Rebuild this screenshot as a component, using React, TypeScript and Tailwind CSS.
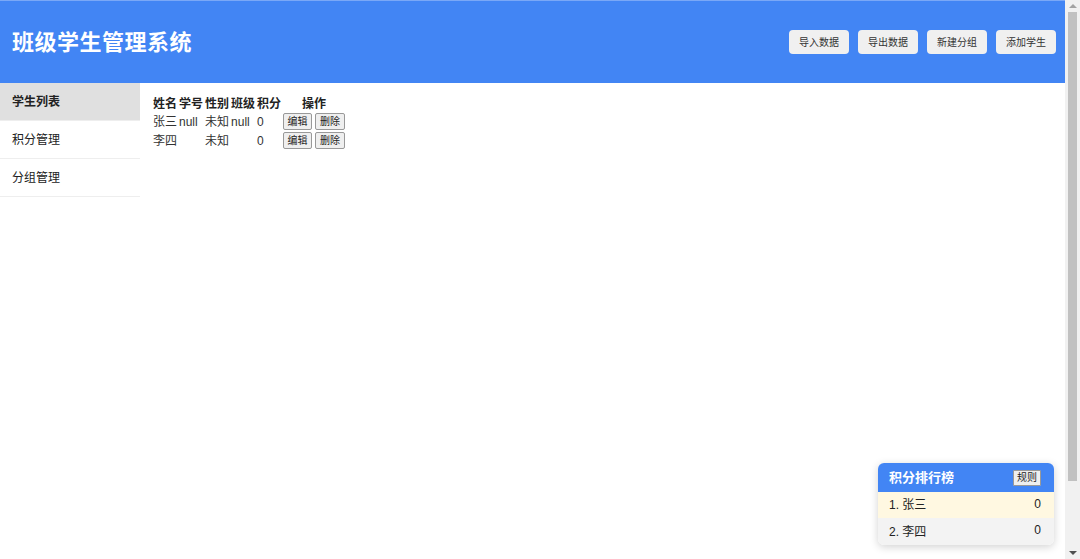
import React from 'react';

const students = [
  { name: '张三', id: 'null', gender: '未知', cls: 'null', score: 0 },
  { name: '李四', id: '', gender: '未知', cls: '', score: 0 },
];

const navItems = ['学生列表', '积分管理', '分组管理'];
const actions = ['导入数据', '导出数据', '新建分组', '添加学生'];

const font = { fontFamily: '"Liberation Sans", "Noto Sans CJK SC", sans-serif' };

// classic window scrollbar, as in the screenshot
const Scrollbar: React.FC = () => (
  <div className="w-[15px] shrink-0 h-full bg-[#f1f1f1] flex flex-col items-center">
    <div className="h-[12px] flex items-center justify-center">
      <div className="w-0 h-0 border-l-[4px] border-r-[4px] border-b-[4px] border-l-transparent border-r-transparent border-b-[#a3a3a3]" />
    </div>
    <div className="w-[9px] h-[469px] bg-[#c1c1c1]" />
    <div className="flex-1" />
    <div className="h-[12px] flex items-center justify-center">
      <div className="w-0 h-0 border-l-[4px] border-r-[4px] border-t-[4px] border-l-transparent border-r-transparent border-t-[#505050]" />
    </div>
  </div>
);

const App: React.FC = () => {
  return (
    <div className="h-[559px] flex bg-white text-[#222] overflow-hidden" style={font}>
      <div className="flex-1 min-w-0">
        <header className="h-[83px] bg-[#4285f4] border-t border-[#7aa8f7] flex items-center justify-between pl-3 pr-[9px]">
          <h1 className="text-[22px] font-bold text-white tracking-[0.5px]">班级学生管理系统</h1>
          <div className="flex gap-[9px]">
            {actions.map(a => (
              <button
                key={a}
                className="w-[60px] h-6 rounded bg-[#f0f0f0] text-[10px] text-[#333] flex items-center justify-center"
              >
                {a}
              </button>
            ))}
          </div>
        </header>

        <div className="flex">
          <nav className="w-[140px] shrink-0">
            {navItems.map((n, i) => (
              <div
                key={n}
                className={`h-[38px] pl-3 flex items-center text-[12px] border-b border-[#eeeeee] ${
                  i === 0 ? 'bg-[#e0e0e0] font-bold border-[#e0e0e0]' : 'bg-white'
                }`}
              >
                {n}
              </div>
            ))}
          </nav>

          <main className="pl-[11px] pt-[12px]">
            <table className="text-[12px] border-separate border-spacing-[2px]">
              <thead>
                <tr className="font-bold leading-[14px]">
                  <th className="p-0 text-left">姓名</th>
                  <th className="p-0 text-left">学号</th>
                  <th className="p-0 text-left">性别</th>
                  <th className="p-0 text-left">班级</th>
                  <th className="p-0 text-left">积分</th>
                  <th className="p-0 text-center">操作</th>
                </tr>
              </thead>
              <tbody>
                {students.map(s => (
                  <tr key={s.name} className="text-[#333]">
                    <td className="p-0 leading-4">{s.name}</td>
                    <td className="p-0 leading-4">{s.id}</td>
                    <td className="p-0 leading-4">{s.gender}</td>
                    <td className="p-0 leading-4">{s.cls}</td>
                    <td className="p-0 leading-4">{s.score}</td>
                    <td className="p-0 leading-4">
                      <div className="flex gap-[3px]">
                        <button className="h-[17px] w-[29px] text-[10px] leading-[15px] border border-[#999] bg-[#efefef] rounded-[2px] text-[#222]">编辑</button>
                        <button className="h-[17px] w-[30px] text-[10px] leading-[15px] border border-[#999] bg-[#efefef] rounded-[2px] text-[#222]">删除</button>
                      </div>
                    </td>
                  </tr>
                ))}
              </tbody>
            </table>
          </main>
        </div>
      </div>

      <Scrollbar />

      <div className="fixed right-[26px] bottom-[14px] w-[176px] rounded-md overflow-hidden bg-white shadow-[0_2px_8px_rgba(0,0,0,0.18)]">
        <div className="h-[29px] bg-[#4285f4] flex items-center justify-between pl-[11px] pr-[13px]">
          <span className="text-[13px] font-bold text-white">积分排行榜</span>
          <button className="h-4 px-[3px] text-[10px] leading-[14px] bg-[#efefef] border border-[#999] rounded-[1px] text-[#222]">规则</button>
        </div>
        <div className="h-[26px] bg-[#fff8e1] flex items-center justify-between pl-[11px] pr-[13px] text-[12px] text-[#222]">
          <span>1. 张三</span>
          <span className="-mt-[3px]">0</span>
        </div>
        <div className="h-[27px] bg-[#f3f3f3] flex items-center justify-between pl-[11px] pr-[13px] text-[12px] text-[#222]">
          <span>2. 李四</span>
          <span className="-mt-[3px]">0</span>
        </div>
      </div>
    </div>
  );
};

export default App;
